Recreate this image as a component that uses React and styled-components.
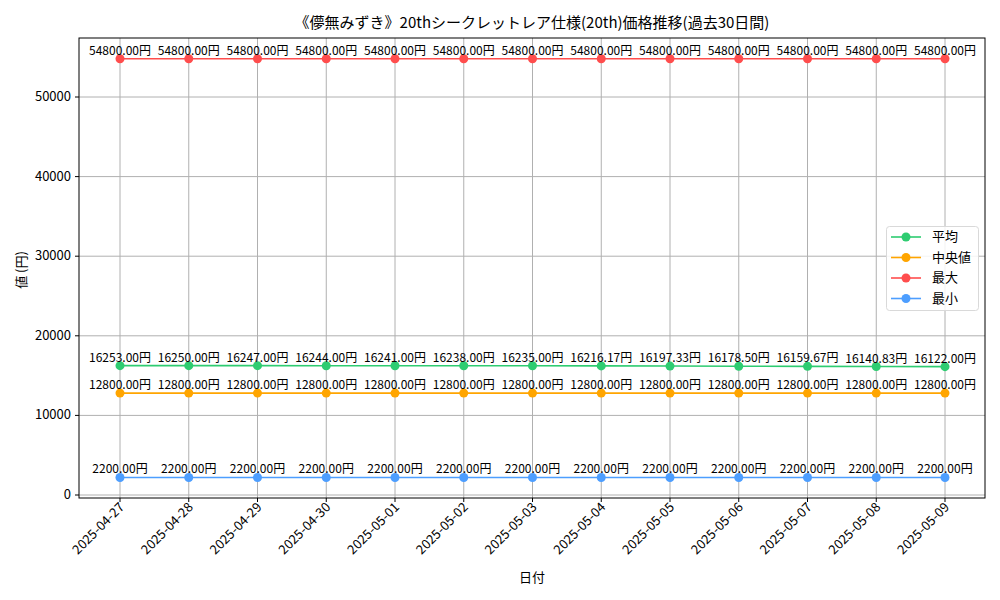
import React from 'react';
import styled, { createGlobalStyle } from 'styled-components';

const GlobalStyle = createGlobalStyle`
  html, body { margin: 0; padding: 0; background: #ffffff; }
  body { font-family: "Noto Sans CJK JP", "DejaVu Sans", sans-serif; }
`;

const Figure = styled.div`
  width: 1000px;
  height: 600px;
  background: #ffffff;
`;

const Chart = styled.svg`
  display: block;
  font-family: "Noto Sans CJK JP", "DejaVu Sans Condensed", sans-serif;
  font-stretch: condensed;
`;

const dates = ['2025-04-27', '2025-04-28', '2025-04-29', '2025-04-30', '2025-05-01', '2025-05-02', '2025-05-03', '2025-05-04', '2025-05-05', '2025-05-06', '2025-05-07', '2025-05-08', '2025-05-09'];
const avg = [16253, 16250, 16247, 16244, 16241, 16238, 16235, 16216.17, 16197.33, 16178.5, 16159.67, 16140.83, 16122];

const series = [
  { name: '平均', color: '#2ecc71', data: avg },
  { name: '中央値', color: '#ffa500', data: dates.map(() => 12800) },
  { name: '最大', color: '#ff4d4d', data: dates.map(() => 54800) },
  { name: '最小', color: '#4d9eff', data: dates.map(() => 2200) },
];

const L = 79, R = 985, T = 38, B = 498;
const px = i => 120 + i * 68.75;
const py = v => 495 - v * (398 / 50000);

export default function App() {
  return (
    <Figure>
      <GlobalStyle />
      <Chart width="1000" height="600" viewBox="0 0 1000 600">
        <text x="532" y="28" fontSize="15" textAnchor="middle">《儚無みずき》20thシークレットレア仕様(20th)価格推移(過去30日間)</text>
        {dates.map((d, i) => (
          <line key={d} x1={px(i)} x2={px(i)} y1={T} y2={B} stroke="#b0b0b0" strokeWidth="1" />
        ))}
        {[0, 10000, 20000, 30000, 40000, 50000].map(v => (
          <g key={v}>
            <line x1={L} x2={R} y1={py(v)} y2={py(v)} stroke="#b0b0b0" strokeWidth="1" />
            <line x1={L - 4} x2={L} y1={py(v)} y2={py(v)} stroke="#000" />
            <text x={L - 8} y={py(v) + 4} fontSize="13" textAnchor="end">{v}</text>
          </g>
        ))}
        {series.map(s => (
          <g key={s.name}>
            <polyline fill="none" stroke={s.color} strokeWidth="1.6"
              points={s.data.map((v, i) => `${px(i)},${py(v)}`).join(' ')} />
            {s.data.map((v, i) => (
              <g key={i}>
                <circle cx={px(i)} cy={py(v)} r="4.5" fill={s.color} />
                <text x={px(i)} y={py(v) - 4} fontSize="12" textAnchor="middle">{v.toFixed(2)}円</text>
              </g>
            ))}
          </g>
        ))}
        <rect x={L} y={T} width={R - L} height={B - T} fill="none" stroke="#000" strokeWidth="1" />
        {dates.map((d, i) => (
          <g key={d}>
            <line x1={px(i)} x2={px(i)} y1={B} y2={B + 4} stroke="#000" />
            <text fontSize="13" textAnchor="end" transform={`translate(${px(i) + 5},${B + 10}) rotate(-45)`}>{d}</text>
          </g>
        ))}
        <text x="532" y="582" fontSize="13" textAnchor="middle">日付</text>
        <text fontSize="13" textAnchor="middle" transform="translate(26,270) rotate(-90)">値 (円)</text>
        <rect x="886.5" y="226.5" width="92" height="84" rx="3" fill="#fff" fillOpacity="0.85" stroke="#d9d9d9" />
        {series.map((s, i) => (
          <g key={s.name}>
            <line x1="891" x2="921" y1={237 + i * 20.5} y2={237 + i * 20.5} stroke={s.color} strokeWidth="1.6" />
            <circle cx="906" cy={237 + i * 20.5} r="4.5" fill={s.color} />
            <text x="932" y={241 + i * 20.5} fontSize="13">{s.name}</text>
          </g>
        ))}
      </Chart>
    </Figure>
  );
}
